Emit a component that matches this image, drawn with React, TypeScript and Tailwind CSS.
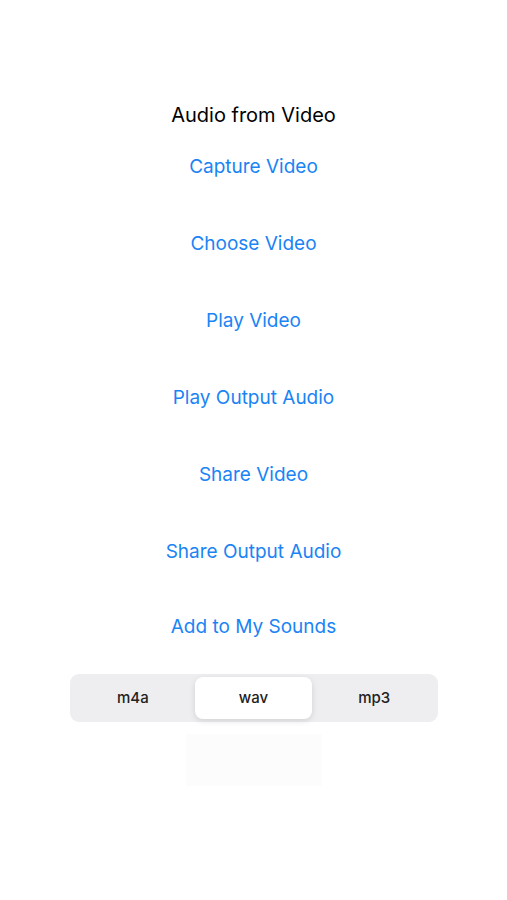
export default function App() {
  const actions = [
    'Capture Video',
    'Choose Video',
    'Play Video',
    'Play Output Audio',
    'Share Video',
    'Share Output Audio',
    'Add to My Sounds',
  ];
  const formats = ['m4a', 'wav', 'mp3'];
  const selected = 'wav';

  return (
    <main className="w-[507px] h-[900px] bg-white flex flex-col items-center pt-[100px] font-['Inter','Liberation_Sans',sans-serif]">
      <h1 className="h-[30px] text-[20px] leading-[30px] text-black">Audio from Video</h1>

      <div className="-mt-[1px] flex flex-col items-center">
        {actions.map((a) => (
          <button key={a} className="h-[77px] last:h-[73px] text-[19px] text-[#1a84f5] flex items-center">
            {a}
          </button>
        ))}
      </div>

      <div className="mt-[10px] w-[368px] h-[48px] rounded-[9px] bg-[#eeeef0] p-[3px] grid grid-cols-3">
        {formats.map((f) => (
          <div
            key={f}
            className={
              f === selected
                ? 'mx-[2px] rounded-[8px] bg-white shadow-[0_2px_6px_rgba(0,0,0,0.12)] flex items-center justify-center text-[15px] font-medium text-[#222]'
                : 'flex items-center justify-center text-[15px] font-medium text-[#222]'
            }
          >
            {f}
          </div>
        ))}
      </div>

      <div className="mt-[12px] w-[136px] h-[52px] bg-[#fcfcfc]" />
    </main>
  );
}
